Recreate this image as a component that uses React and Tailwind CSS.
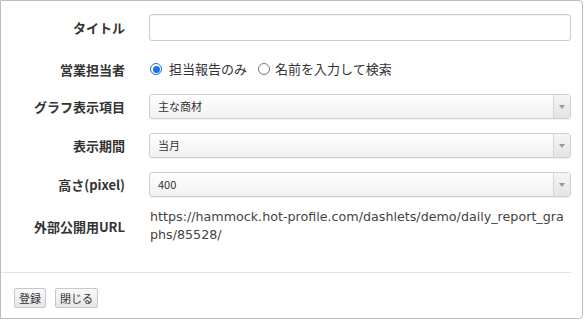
import React from "react";

const jp = { fontFamily: '"Noto Sans CJK JP", "Noto Sans", sans-serif' };

function Label({ children, className = "" }) {
  return (
    <div className={"w-[124px] shrink-0 text-right text-[13px] font-bold text-[#333] leading-none " + className}>
      {children}
    </div>
  );
}

function Select({ value }) {
  return (
    <div className="flex h-[25px] w-[422px] items-stretch rounded-[3px] border border-[#cfcfcf] bg-gradient-to-b from-white to-[#f1f1f1] shadow-[0_1px_1px_rgba(0,0,0,0.06)]">
      <div className="flex flex-1 items-center pl-[8px] text-[11px] text-[#333]">{value}</div>
      <div className="flex w-[17px] items-center justify-center border-l border-[#d4d4d4] bg-gradient-to-b from-[#f6f6f6] to-[#e4e4e4]">
        <div className="h-0 w-0 border-x-[3px] border-t-[4px] border-x-transparent border-t-[#999]" />
      </div>
    </div>
  );
}

function Radio({ checked }) {
  return checked ? (
    <span className="flex h-[12px] w-[12px] shrink-0 items-center justify-center rounded-full border border-[#1a73e8] bg-white">
      <span className="block h-[7px] w-[7px] rounded-full bg-[#1a73e8]" />
    </span>
  ) : (
    <span className="block h-[12px] w-[12px] shrink-0 rounded-full border border-[#777] bg-white" />
  );
}

export default function App() {
  return (
    <div className="h-[320px] w-[584px] bg-white" style={jp}>
      <div className="flex h-[319px] w-[583px] flex-col rounded-r-[4px] border border-[#bdbdbd] bg-white">
        {/* title */}
        <div className="mt-[13px] flex h-[27px] items-center">
          <Label>タイトル</Label>
          <div className="ml-[24px] h-[27px] w-[422px] rounded-[3px] border border-[#cccccc] bg-white shadow-[inset_0_1px_1px_rgba(0,0,0,0.05)]" />
        </div>
        {/* radio */}
        <div className="mt-[18px] flex h-[20px] items-center">
          <Label>営業担当者</Label>
          <div className="ml-[25px] flex items-center text-[13px] text-[#333]">
            <Radio checked />
            <span className="ml-[7px]">担当報告のみ</span>
            <span className="ml-[11px] block"><Radio /></span>
            <span className="ml-[5px]">名前を入力して検索</span>
          </div>
        </div>
        {/* graph */}
        <div className="mt-[15px] flex h-[25px] items-center">
          <Label>グラフ表示項目</Label>
          <div className="ml-[24px]"><Select value="主な商材" /></div>
        </div>
        <div className="mt-[14px] flex h-[25px] items-center">
          <Label>表示期間</Label>
          <div className="ml-[24px]"><Select value="当月" /></div>
        </div>
        <div className="mt-[14px] flex h-[25px] items-center">
          <Label>高さ(pixel)</Label>
          <div className="ml-[24px]"><Select value="400" /></div>
        </div>
        <div className="mt-[11px] flex items-center">
          <Label>外部公開用URL</Label>
          <div
            className="ml-[25px] w-[416px] break-all leading-[18px] text-[#444]"
            style={{ fontFamily: '"DejaVu Sans", "Noto Sans CJK JP", sans-serif', fontSize: "12.7px" }}
          >
            https://hammock.hot-profile.com/dashlets/demo/daily_report_graphs/85528/
          </div>
        </div>
        <div className="mt-[28px] mr-[11px] h-px bg-[#e3e3e3]" />
        <div className="ml-[13px] mt-[15px] flex gap-[9px]">
          <button className="h-[20px] rounded-[2px] border border-[#c8c8c8] bg-gradient-to-b from-[#fafafa] to-[#e6e6e6] px-[4px] text-[11px] leading-none text-[#333]">
            登録
          </button>
          <button className="h-[20px] rounded-[2px] border border-[#c8c8c8] bg-gradient-to-b from-[#fafafa] to-[#e6e6e6] px-[4px] text-[11px] leading-none text-[#333]">
            閉じる
          </button>
        </div>
      </div>
    </div>
  );
}
